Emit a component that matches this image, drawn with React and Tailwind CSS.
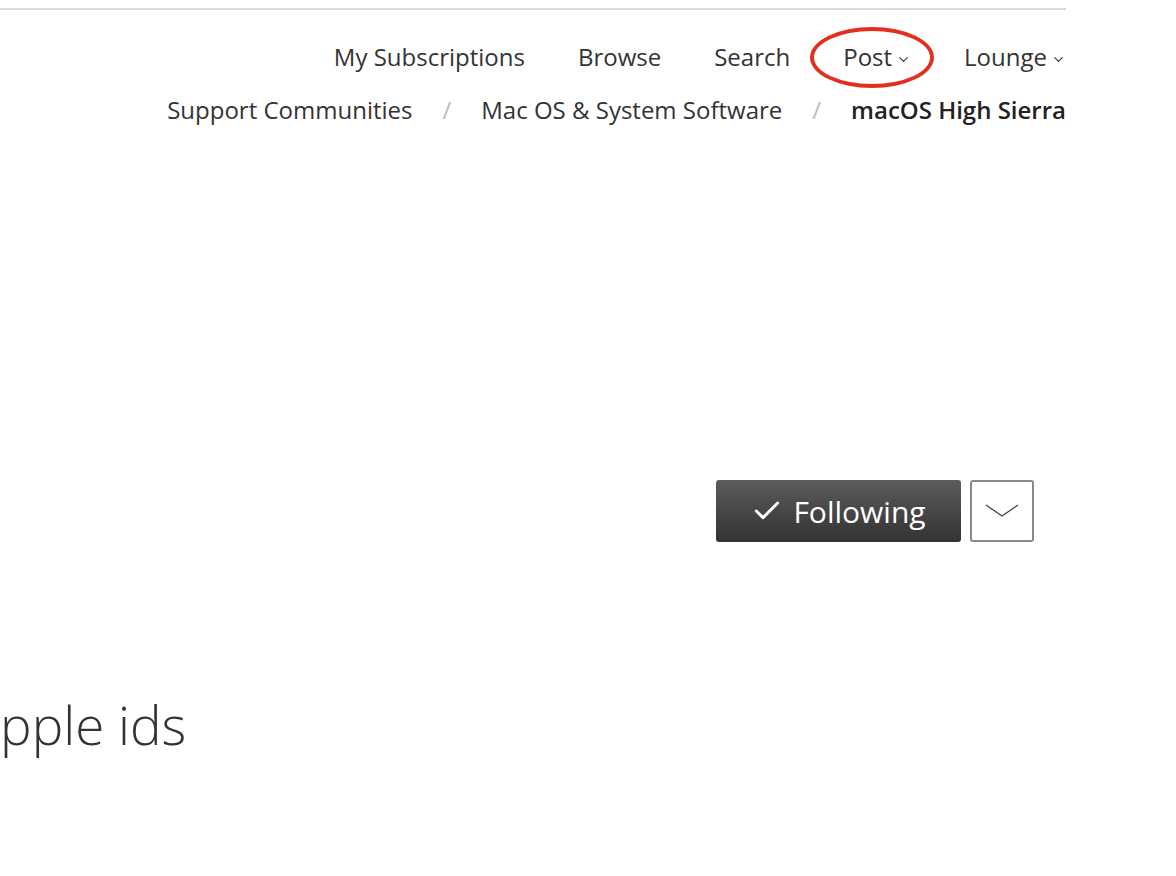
import { Check, ChevronDown } from 'lucide-react';

const navItems = [
  { label: 'My Subscriptions' },
  { label: 'Browse' },
  { label: 'Search' },
  { label: 'Post', menu: true, circled: true },
  { label: 'Lounge', menu: true },
];

function NavItem({ label, menu, circled }) {
  return (
    <div className="relative flex items-center">
      <span>{label}</span>
      {menu && <ChevronDown className="ml-[4px] mt-[4px] h-[15px] w-[15px]" strokeWidth={1.8} />}
      {circled && (
        <span className="pointer-events-none absolute left-[-33px] top-[-13px] h-[61px] w-[124px] rounded-[50%] border-[4px] border-[#e2301f]" />
      )}
    </div>
  );
}

export default function App() {
  return (
    <div className="min-h-[876px] w-[1176px] overflow-hidden bg-white text-[#333]" style={{ fontFamily: '"Open Sans", "Noto Sans", sans-serif' }}>
      <div className="w-[1066px]">
        <div className="mt-[8px] h-[2px] bg-[#d9d9d9]" />

        <nav className="mt-[30px] flex items-center justify-end gap-[53px] text-[24px] leading-[34px] text-[#333]">
          {navItems.map((item) => (
            <NavItem key={item.label} {...item} />
          ))}
        </nav>

        <div className="mt-[19px] flex items-center justify-end gap-[30px] text-[24px] leading-[34px] text-[#333]">
          <span>Support Communities</span>
          <span className="text-[#bbb]">/</span>
          <span>Mac OS &amp; System Software</span>
          <span className="text-[#bbb]">/</span>
          <span className="font-semibold text-[#222]">macOS High Sierra</span>
        </div>

        <div className="mt-[353px] flex items-stretch justify-end gap-[9px] pr-[32px]">
          <button className="flex h-[62px] w-[245px] items-center justify-center gap-[10px] rounded-[3px] bg-gradient-to-b from-[#5c5c5c] to-[#333] text-[30px] text-white">
            <Check className="h-[32px] w-[32px]" strokeWidth={2.2} />
            <span>Following</span>
          </button>
          <button className="flex h-[62px] w-[64px] items-center justify-center rounded-[3px] border-2 border-[#8a8a8a] bg-white">
            <svg width="34" height="14" viewBox="0 0 34 14" fill="none" stroke="#444" strokeWidth="1.3">
              <path d="M1 1 L17 12 L33 1" />
            </svg>
          </button>
        </div>

        <h1 className="ml-[-28px] mt-[151px] text-[53px] font-light leading-[64px] text-[#333]">apple ids</h1>
      </div>
    </div>
  );
}
